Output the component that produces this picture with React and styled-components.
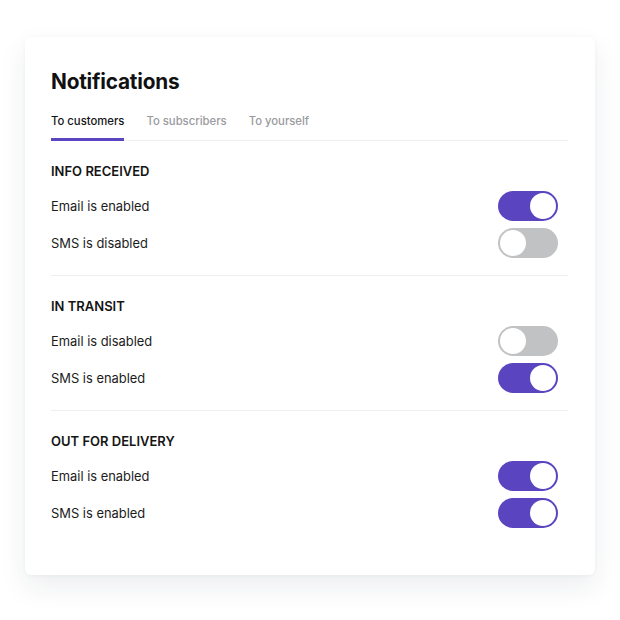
import React, { useState } from "react";
import styled, { createGlobalStyle } from "styled-components";

const Global = createGlobalStyle`
  html, body { margin: 0; padding: 0; background: #ffffff; }
  body { font-family: Inter, "Noto Sans", sans-serif; color: #151515; }
  * { box-sizing: border-box; }
`;

const Page = styled.div`
  padding: 37px 25px 45px 25px;
`;

const Card = styled.div`
  width: 570px;
  background: #fff;
  border-radius: 6px;
  box-shadow: 0 12px 28px rgba(30, 35, 60, 0.08), 0 1px 4px rgba(30, 35, 60, 0.04);
  padding: 31px 27px 30px 26px;
`;

const Title = styled.h1`
  margin: 0;
  font-size: 20.8px;
  line-height: 28px;
  font-weight: 700;
  letter-spacing: -0.2px;
  color: #111;
`;

const Tabs = styled.div`
  display: flex;
  gap: 22px;
  margin-top: 17px;
  border-bottom: 1px solid #eeeff1;
`;

const Tab = styled.button`
  appearance: none;
  background: none;
  border: none;
  padding: 0 0 9px 0;
  margin: 0 0 -1px 0;
  font-family: inherit;
  font-size: 11.3px;
  line-height: 16px;
  font-weight: 500;
  color: ${(p) => (p.$active ? "#151515" : "#9a9a9e")};
  border-bottom: 3px solid ${(p) => (p.$active ? "#5b45c2" : "transparent")};
  cursor: pointer;
`;

const Section = styled.section`
  padding: 21px 0 17px 0;
  border-bottom: ${(p) => (p.$last ? "none" : "1px solid #eeeff1")};
`;

const SectionTitle = styled.h2`
  margin: 0 0 11px 0;
  font-size: 13px;
  line-height: 18px;
  font-weight: 600;
  color: #151515;
  text-transform: uppercase;
`;

const Rows = styled.div`
  display: flex;
  flex-direction: column;
  gap: 7px;
`;

const Row = styled.div`
  display: flex;
  align-items: center;
  justify-content: space-between;
  padding-right: 10px;
  height: 30px;
`;

const Label = styled.span`
  font-size: 12.9px;
  color: #1c1c1c;
`;

const Track = styled.button`
  appearance: none;
  position: relative;
  width: 60px;
  height: 30px;
  border: none;
  border-radius: 15px;
  padding: 0;
  background: ${(p) => (p.$on ? "#5a44c0" : "#c1c2c4")};
  cursor: pointer;
`;

const Knob = styled.span`
  position: absolute;
  top: 2px;
  left: ${(p) => (p.$on ? "32px" : "2px")};
  width: 26px;
  height: 26px;
  border-radius: 50%;
  background: #fff;
`;

const Toggle = ({ on, onClick }) => (
  <Track $on={on} onClick={onClick} aria-pressed={on}>
    <Knob $on={on} />
  </Track>
);

const initial = [
  { title: "Info received", email: true, sms: false },
  { title: "In transit", email: false, sms: true },
  { title: "Out for delivery", email: true, sms: true },
];

export default function App() {
  const [tab, setTab] = useState(0);
  const [groups, setGroups] = useState(initial);

  const flip = (i, key) =>
    setGroups((g) => g.map((x, j) => (j === i ? { ...x, [key]: !x[key] } : x)));

  return (
    <Page>
      <Global />
      <Card>
        <Title>Notifications</Title>
        <Tabs>
          {["To customers", "To subscribers", "To yourself"].map((t, i) => (
            <Tab key={t} $active={tab === i} onClick={() => setTab(i)}>
              {t}
            </Tab>
          ))}
        </Tabs>
        {groups.map((g, i) => (
          <Section key={g.title} $last={i === groups.length - 1}>
            <SectionTitle>{g.title}</SectionTitle>
            <Rows>
              <Row>
                <Label>Email is {g.email ? "enabled" : "disabled"}</Label>
                <Toggle on={g.email} onClick={() => flip(i, "email")} />
              </Row>
              <Row>
                <Label>SMS is {g.sms ? "enabled" : "disabled"}</Label>
                <Toggle on={g.sms} onClick={() => flip(i, "sms")} />
              </Row>
            </Rows>
          </Section>
        ))}
      </Card>
    </Page>
  );
}
